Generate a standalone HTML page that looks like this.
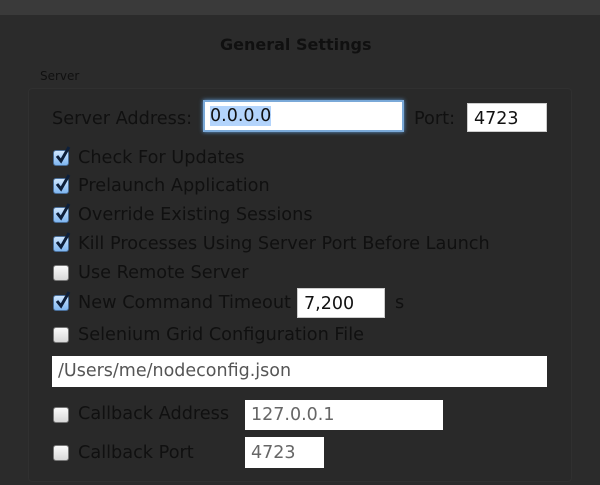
<!DOCTYPE html>
<html><head><style>
body{margin:0;width:600px;height:485px;overflow:hidden;background:#2b2b2b;font-family:"DejaVu Sans",sans-serif;position:relative;color:#101010}
.a{position:absolute;white-space:nowrap}
.top{left:0;top:0;width:600px;height:15px;background:#3a3a3a}
.box{left:28px;top:88px;width:542px;height:392px;border:1px solid #303030;border-radius:4px;background:#292929}
.lbl{font-size:17.7px}
.in{position:absolute;background:#fff;font-size:17.5px;box-sizing:border-box;padding-left:6px;color:#111}
.cb{position:absolute;left:53px;width:16px;height:16px;border-radius:3px;background:linear-gradient(#fafafa,#d8d8d8);border:1px solid #777;box-sizing:border-box}
.cb.on{background:linear-gradient(#cfe6ff,#7fb6f0);border-color:#4a6f9a}
.cb.on svg{position:absolute;left:1px;top:-5px}
</style></head><body>
<div class="a top"></div>
<div class="a box"></div>
<div class="a" style="left:220px;top:35px;font-size:16px;font-weight:bold">General Settings</div>
<div class="a" style="left:40px;top:69px;font-size:12px">Server</div>
<div class="a lbl" style="left:52px;top:109px">Server Address:</div>
<div class="in" style="left:203px;top:100px;width:201px;height:32px;border:2px solid #7aa9d8;box-shadow:0 0 4px #5e9ad6;line-height:28px;padding-left:5px"><span style="background:#b3d4fc">0.0.0.0</span></div>
<div class="a lbl" style="left:414px;top:109px">Port:</div>
<div class="in" style="left:467px;top:103px;width:80px;height:29px;line-height:30px;border:1px solid #ccc">4723</div>

<div class="cb on" style="top:150px"><svg width="16" height="18" viewBox="0 0 16 18"><path d="M2 10 L6 15 L14 1" stroke="#0d1f3a" stroke-width="3" fill="none"/></svg></div>
<div class="a lbl" style="left:78px;top:148px">Check For Updates</div>
<div class="cb on" style="top:178px"><svg width="16" height="18" viewBox="0 0 16 18"><path d="M2 10 L6 15 L14 1" stroke="#0d1f3a" stroke-width="3" fill="none"/></svg></div>
<div class="a lbl" style="left:78px;top:176px">Prelaunch Application</div>
<div class="cb on" style="top:207px"><svg width="16" height="18" viewBox="0 0 16 18"><path d="M2 10 L6 15 L14 1" stroke="#0d1f3a" stroke-width="3" fill="none"/></svg></div>
<div class="a lbl" style="left:78px;top:205px">Override Existing Sessions</div>
<div class="cb on" style="top:236px"><svg width="16" height="18" viewBox="0 0 16 18"><path d="M2 10 L6 15 L14 1" stroke="#0d1f3a" stroke-width="3" fill="none"/></svg></div>
<div class="a lbl" style="left:78px;top:234px">Kill Processes Using Server Port Before Launch</div>
<div class="cb" style="top:265px"></div>
<div class="a lbl" style="left:78px;top:263px">Use Remote Server</div>
<div class="cb on" style="top:295px"><svg width="16" height="18" viewBox="0 0 16 18"><path d="M2 10 L6 15 L14 1" stroke="#0d1f3a" stroke-width="3" fill="none"/></svg></div>
<div class="a lbl" style="left:78px;top:293px">New Command Timeout</div>
<div class="in" style="left:297px;top:288px;width:88px;height:30px;line-height:31px;border:1px solid #ccc">7,200</div>
<div class="a lbl" style="left:395px;top:293px">s</div>
<div class="cb" style="top:327px"></div>
<div class="a lbl" style="left:78px;top:325px">Selenium Grid Configuration File</div>
<div class="in" style="left:52px;top:356px;width:495px;height:31px;line-height:31px;color:#555">/Users/me/nodeconfig.json</div>
<div class="cb" style="top:407px"></div>
<div class="a lbl" style="left:78px;top:404px">Callback Address</div>
<div class="in" style="left:245px;top:400px;width:198px;height:30px;line-height:31px;color:#666">127.0.0.1</div>
<div class="cb" style="top:445px"></div>
<div class="a lbl" style="left:78px;top:443px">Callback Port</div>
<div class="in" style="left:245px;top:437px;width:79px;height:31px;line-height:32px;color:#666">4723</div>
</body></html>
